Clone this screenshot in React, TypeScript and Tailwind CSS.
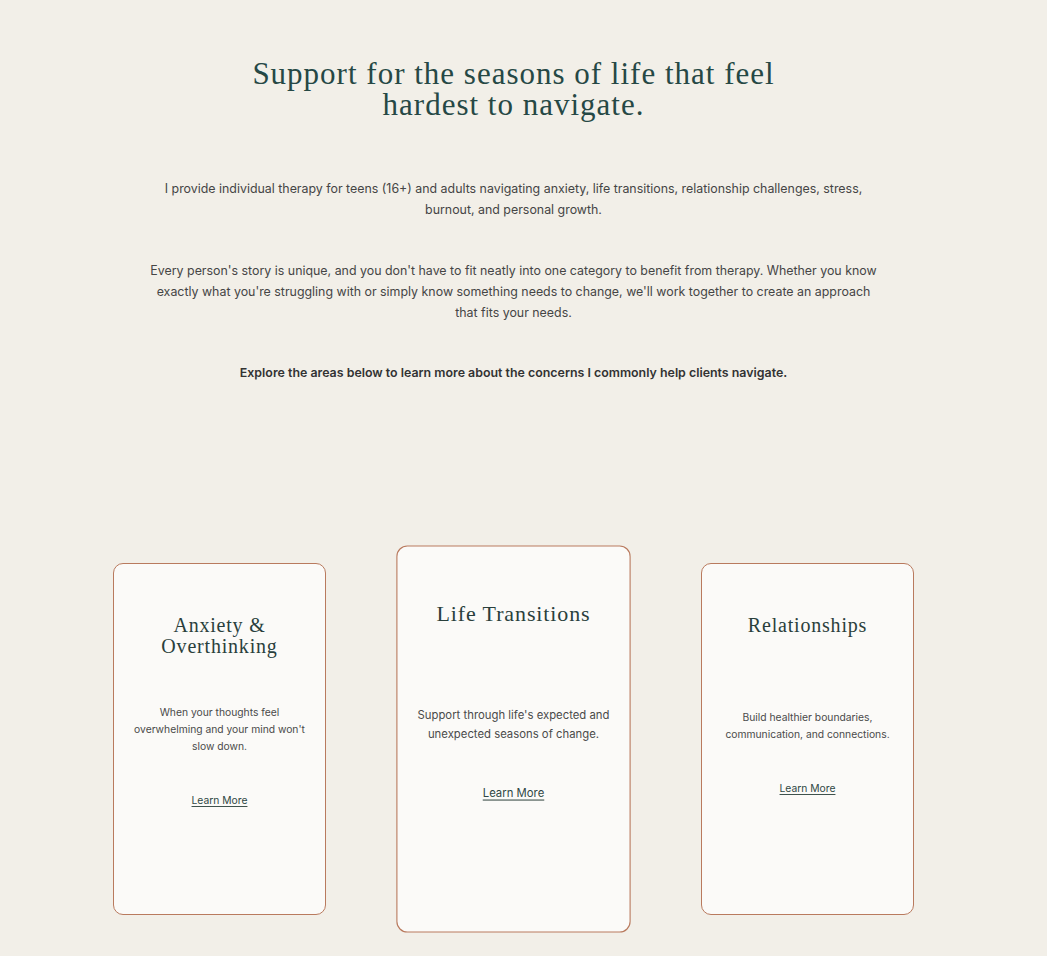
import React from "react";

const serif = { fontFamily: '"Liberation Serif", "Times New Roman", serif' };

type CardProps = {
  title: React.ReactNode;
  desc: React.ReactNode;
  descMt: string;
  featured?: boolean;
};

function Card({ title, desc, descMt, featured }: CardProps) {
  return (
    <div
      className={
        "w-[213px] h-[352px] shrink-0 rounded-[10px] border border-[#b97a5e] bg-[#fbfaf8] flex flex-col items-center text-center px-[14px] pt-[51px] " +
        (featured ? "scale-[1.1]" : "")
      }
    >
      <h3
        className="text-[20px] leading-[21px] tracking-[0.8px] text-[#2a3f3c] font-normal"
        style={serif}
      >
        {title}
      </h3>
      <p className={"text-[10.3px] leading-[17px] text-[#4a4a4a] whitespace-nowrap " + descMt}>{desc}</p>
      <a
        href="#"
        className="mt-[37px] text-[10.3px] leading-[17px] text-[#2f4744] underline decoration-[#3f524d] underline-offset-[2px]"
      >
        Learn More
      </a>
    </div>
  );
}

export default function App() {
  return (
    <div
      className="min-h-screen w-full bg-[#f2efe8]"
      style={{ fontFamily: 'Inter, "Liberation Sans", Arial, sans-serif' }}
    >
      <div className="w-[1027px] flex flex-col items-center pt-[58px] pb-[24px]">
        <h1
          className="text-[31px] leading-[31px] tracking-[1px] text-[#264845] text-center font-normal"
          style={serif}
        >
          Support for the seasons of life that feel
          <br />
          hardest to navigate.
        </h1>
        <div className="w-[730px] mt-[58px] text-center text-[12.4px] leading-[21px] text-[#454545]">
          <p>
            I provide individual therapy for teens (16+) and adults navigating anxiety, life
            transitions, relationship challenges, stress, burnout, and personal growth.
          </p>
          <p className="mt-[40px]">
            Every person's story is unique, and you don't have to fit neatly into one category to
            benefit from therapy. Whether you know exactly what you're struggling with or simply know
            something needs to change, we'll work together to create an approach that fits your
            needs.
          </p>
          <p className="mt-[39px] font-semibold text-[#333333]">
            Explore the areas below to learn more about the concerns I commonly help clients
            navigate.
          </p>
        </div>
        <div className="mt-[180px] flex gap-[81px] justify-center">
          <Card
            title={
              <>
                Anxiety &amp;
                <br />
                Overthinking
              </>
            }
            descMt="mt-[47px]"
            desc={
              <>
                When your thoughts feel
                <br />
                overwhelming and your mind won't
                <br />
                slow down.
              </>
            }
          />
          <Card
            featured
            title="Life Transitions"
            descMt="mt-[73px]"
            desc={
              <>
                Support through life's expected and
                <br />
                unexpected seasons of change.
              </>
            }
          />
          <Card
            title="Relationships"
            descMt="mt-[73px]"
            desc={
              <>
                Build healthier boundaries,
                <br />
                communication, and connections.
              </>
            }
          />
        </div>
      </div>
    </div>
  );
}
